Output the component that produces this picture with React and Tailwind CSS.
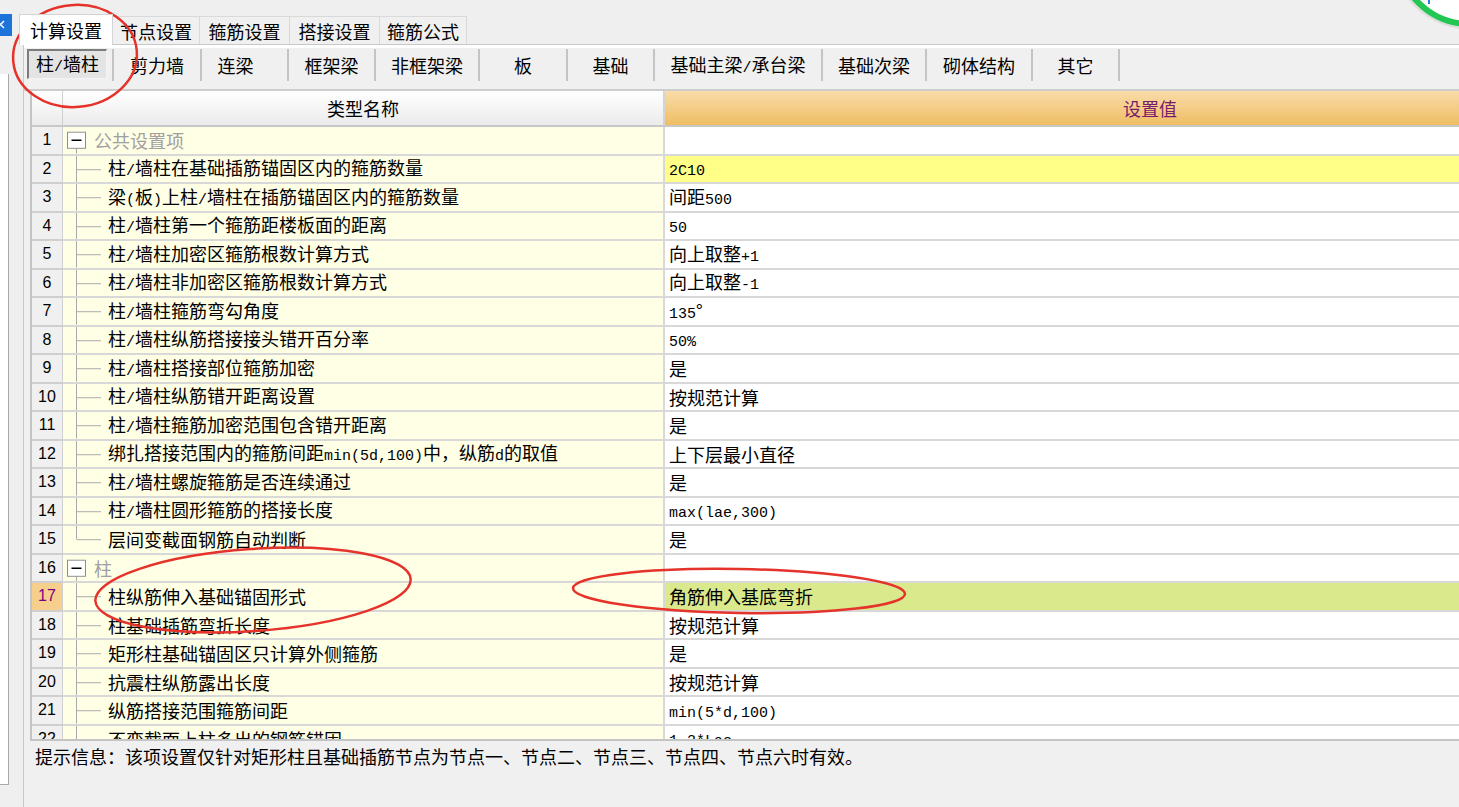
import React from 'react';

const tabs = ['计算设置', '节点设置', '箍筋设置', '搭接设置', '箍筋公式'];
const tabWidths = ['w-[87px]', 'w-[90px]', 'w-[90px]', 'w-[87px]'];

const buttons = [
  { label: '剪力墙', w: 'w-[88px]' },
  { label: '连梁', w: 'w-[87px] pr-[18px]' },
  { label: '框架梁', w: 'w-[87px]' },
  { label: '非框架梁', w: 'w-[104px]' },
  { label: '板', w: 'w-[88px]' },
  { label: '基础', w: 'w-[87px]' },
  { label: '基础主梁/承台梁', w: 'w-[168px]' },
  { label: '基础次梁', w: 'w-[104px]' },
  { label: '砌体结构', w: 'w-[106px]' },
  { label: '其它', w: 'w-[87px]' },
];

// kind: g = group header, m = middle child, l = last child
const rows = [
  { kind: 'g', name: '公共设置项', value: '' },
  { kind: 'm', name: '柱/墙柱在基础插筋锚固区内的箍筋数量', value: '2C10', bg: 'bg-[#ffff88]' },
  { kind: 'm', name: '梁(板)上柱/墙柱在插筋锚固区内的箍筋数量', value: '间距500' },
  { kind: 'm', name: '柱/墙柱第一个箍筋距楼板面的距离', value: '50' },
  { kind: 'm', name: '柱/墙柱加密区箍筋根数计算方式', value: '向上取整+1' },
  { kind: 'm', name: '柱/墙柱非加密区箍筋根数计算方式', value: '向上取整-1' },
  { kind: 'm', name: '柱/墙柱箍筋弯勾角度', value: '135°' },
  { kind: 'm', name: '柱/墙柱纵筋搭接接头错开百分率', value: '50%' },
  { kind: 'm', name: '柱/墙柱搭接部位箍筋加密', value: '是' },
  { kind: 'm', name: '柱/墙柱纵筋错开距离设置', value: '按规范计算' },
  { kind: 'm', name: '柱/墙柱箍筋加密范围包含错开距离', value: '是' },
  { kind: 'm', name: '绑扎搭接范围内的箍筋间距min(5d,100)中，纵筋d的取值', value: '上下层最小直径' },
  { kind: 'm', name: '柱/墙柱螺旋箍筋是否连续通过', value: '是' },
  { kind: 'm', name: '柱/墙柱圆形箍筋的搭接长度', value: 'max(lae,300)' },
  { kind: 'l', name: '层间变截面钢筋自动判断', value: '是' },
  { kind: 'g', name: '柱', value: '' },
  { kind: 'm', name: '柱纵筋伸入基础锚固形式', value: '角筋伸入基底弯折', bg: 'bg-[#d9e98b]', sel: true },
  { kind: 'm', name: '柱基础插筋弯折长度', value: '按规范计算' },
  { kind: 'm', name: '矩形柱基础锚固区只计算外侧箍筋', value: '是' },
  { kind: 'm', name: '抗震柱纵筋露出长度', value: '按规范计算' },
  { kind: 'm', name: '纵筋搭接范围箍筋间距', value: 'min(5*d,100)' },
  { kind: 'm', name: '不变截面上柱多出的钢筋锚固', value: '1.2*Lae' },
];

// ascii runs are narrower (half width) in the original bitmap font
function Txt({ s }) {
  const parts = s.split(/([\x20-\x7e]+)/).filter(Boolean);
  return (
    <span className="whitespace-nowrap">
      {parts.map((p, i) =>
        /^[\x20-\x7e]+$/.test(p) ? (
          <span key={i} className="font-['Liberation_Mono',monospace] text-[15px]">{p}</span>
        ) : (
          <span key={i}>{p}</span>
        )
      )}
    </span>
  );
}

function Tree({ kind }) {
  if (kind === 'g') {
    return (
      <svg width="31" height="100%" viewBox="0 0 31 28" preserveAspectRatio="none" className="flex-none">
        <line x1="13.5" y1="22" x2="13.5" y2="28" stroke="#a8a8a8" />
        <rect x="4.5" y="5.5" width="18" height="17" fill="#fff" stroke="#8c8c8c" />
        <line x1="8.5" y1="14" x2="18.5" y2="14" stroke="#000" strokeWidth="1.6" />
      </svg>
    );
  }
  return (
    <svg width="45" height="100%" viewBox="0 0 45 28" preserveAspectRatio="none" className="flex-none">
      <line x1="13.5" y1="0" x2="13.5" y2={kind === 'l' ? 14 : 28} stroke="#a8a8a8" />
      <line x1="13.5" y1="14.5" x2="38" y2="14.5" stroke="#a8a8a8" />
    </svg>
  );
}

function Row({ r, n }) {
  return (
    <div className="flex h-[28.5px] flex-none">
      <div
        className={`w-[31px] flex-none flex items-center justify-center border-r border-b-2 border-[#cfcfcf] font-['Liberation_Sans',sans-serif] text-[16px] ${
          r.sel ? 'bg-[#f7cf8c] text-[#800080]' : 'bg-[#f0f0f0] text-black'
        }`}
      >
        {n}
      </div>
      <div className="w-[602px] flex-none flex items-stretch border-r-2 border-b-2 border-[#d8d8d8] bg-[#ffffe6]">
        <Tree kind={r.kind} />
        <div className={`flex items-center ${r.kind === 'g' ? 'text-[#a0a0a0]' : 'text-black'}`}>
          <Txt s={r.name} />
        </div>
      </div>
      <div className={`w-[970px] flex-none flex items-center pl-[4px] border-b-2 border-[#d8d8d8] ${r.bg || 'bg-white'}`}>
        <Txt s={r.value} />
      </div>
    </div>
  );
}

export default function App() {
  return (
    <div className="relative w-[1459px] h-[807px] overflow-hidden bg-[#efefef] text-black text-[18px] leading-none font-['Noto_Sans_CJK_SC',sans-serif]">
      <div className="flex h-full">
        {/* left strip */}
        <div className="w-[18px] flex-none flex flex-col">
          <div className="h-[14px]" />
          <div className="h-[22px] w-[12px] bg-[#1c74d8] overflow-hidden">
            <svg width="12" height="22" viewBox="0 0 12 22">
              <path d="M-3 7 L4 14 M4 7 L-3 14" stroke="#fff" strokeWidth="1.5" />
            </svg>
          </div>
          <div className="h-[38px]" />
          <div className="w-[9px] h-[711px] bg-white border-r border-b border-[#a8a8a8]" />
        </div>

        {/* main */}
        <div className="flex-1 flex flex-col min-w-0">
          <div className="h-[44px] flex items-end pl-[1px] flex-none">
            <div className="w-[94px] h-[31px] -mb-[1px] bg-white border border-b-0 border-[#d4d4d4] flex items-center justify-center z-10">
              {tabs[0]}
            </div>
            {tabs.slice(1).map((t, i) => (
              <div
                key={t}
                className={`${tabWidths[i]} h-[28px] bg-[#f0f0f0] border border-l-0 border-b-0 border-[#d9d9d9] flex items-center justify-center`}
              >
                {t}
              </div>
            ))}
          </div>

          <div className="flex-1 flex flex-col ml-[5px] border-l border-t border-[#c8c8c8] bg-[#f0f0f0] min-h-0">
            <div className="h-[3px] bg-white flex-none" />
            <div className="h-[41px] flex items-start pt-[1px] flex-none">
              <div className="w-[90px] h-[32px] flex-none flex items-start border-r-2 border-[#c4c4c4]">
                <div className="ml-[3px] w-[80px] h-[30px] flex items-center justify-center bg-[#e4e4e4] border-t-2 border-l-2 border-[#7c7c7c] border-r border-b border-r-[#f4f4f4] border-b-[#f4f4f4]">
                  <Txt s="柱/墙柱" />
                </div>
              </div>
              {buttons.map((b) => (
                <div
                  key={b.label}
                  className={`${b.w} h-[32px] flex-none flex items-center justify-center border-r-2 border-[#c4c4c4]`}
                >
                  <Txt s={b.label} />
                </div>
              ))}
            </div>
            <div className="h-[2px] bg-[#cdcdcd] flex-none" />

            <div className="ml-[6px] h-[650px] flex-none flex flex-col overflow-hidden border-l-2 border-b-2 border-[#c4c4c4] bg-white">
              <div className="flex h-[36px] flex-none border-b-2 border-[#c8c8c8]">
                <div className="w-[31px] flex-none border-r border-[#cfcfcf] bg-gradient-to-b from-white to-[#ebebeb]" />
                <div className="w-[602px] flex-none flex items-center justify-center border-r-2 border-[#d4d4d4] bg-gradient-to-b from-white to-[#ebebeb]">
                  类型名称
                </div>
                <div className="w-[970px] flex-none flex items-center justify-center bg-gradient-to-b from-[#f9dca8] to-[#efbd62] text-[#7a1a6c]">
                  设置值
                </div>
              </div>
              {rows.map((r, i) => (
                <Row key={i} r={r} n={i + 1} />
              ))}
            </div>

            <div className="flex-1 pl-[11px] pt-[6px] whitespace-nowrap">
              提示信息：该项设置仅针对矩形柱且基础插筋节点为节点一、节点二、节点三、节点四、节点六时有效。
            </div>
          </div>
        </div>
      </div>

      {/* annotations drawn over the screenshot */}
      <svg className="absolute inset-0 pointer-events-none" width="1459" height="807" viewBox="0 0 1459 807">
        <circle cx="1470" cy="-49" r="77" fill="none" stroke="#dedede" strokeWidth="3" />
        <circle cx="1470" cy="-49" r="73" fill="#fff" stroke="#22c653" strokeWidth="6" />
        <rect x="1428" y="0" width="2" height="4" fill="#2a7ae2" />
        <ellipse cx="75" cy="56" rx="62" ry="51" transform="rotate(-5 75 56)" fill="none" stroke="#e5322b" strokeWidth="2.5" />
        <ellipse cx="253" cy="590" rx="158" ry="41" transform="rotate(-4 253 590)" fill="none" stroke="#e5322b" strokeWidth="2.5" />
        <ellipse cx="739" cy="591" rx="166" ry="22" transform="rotate(1 739 591)" fill="none" stroke="#e5322b" strokeWidth="2.5" />
      </svg>
    </div>
  );
}
